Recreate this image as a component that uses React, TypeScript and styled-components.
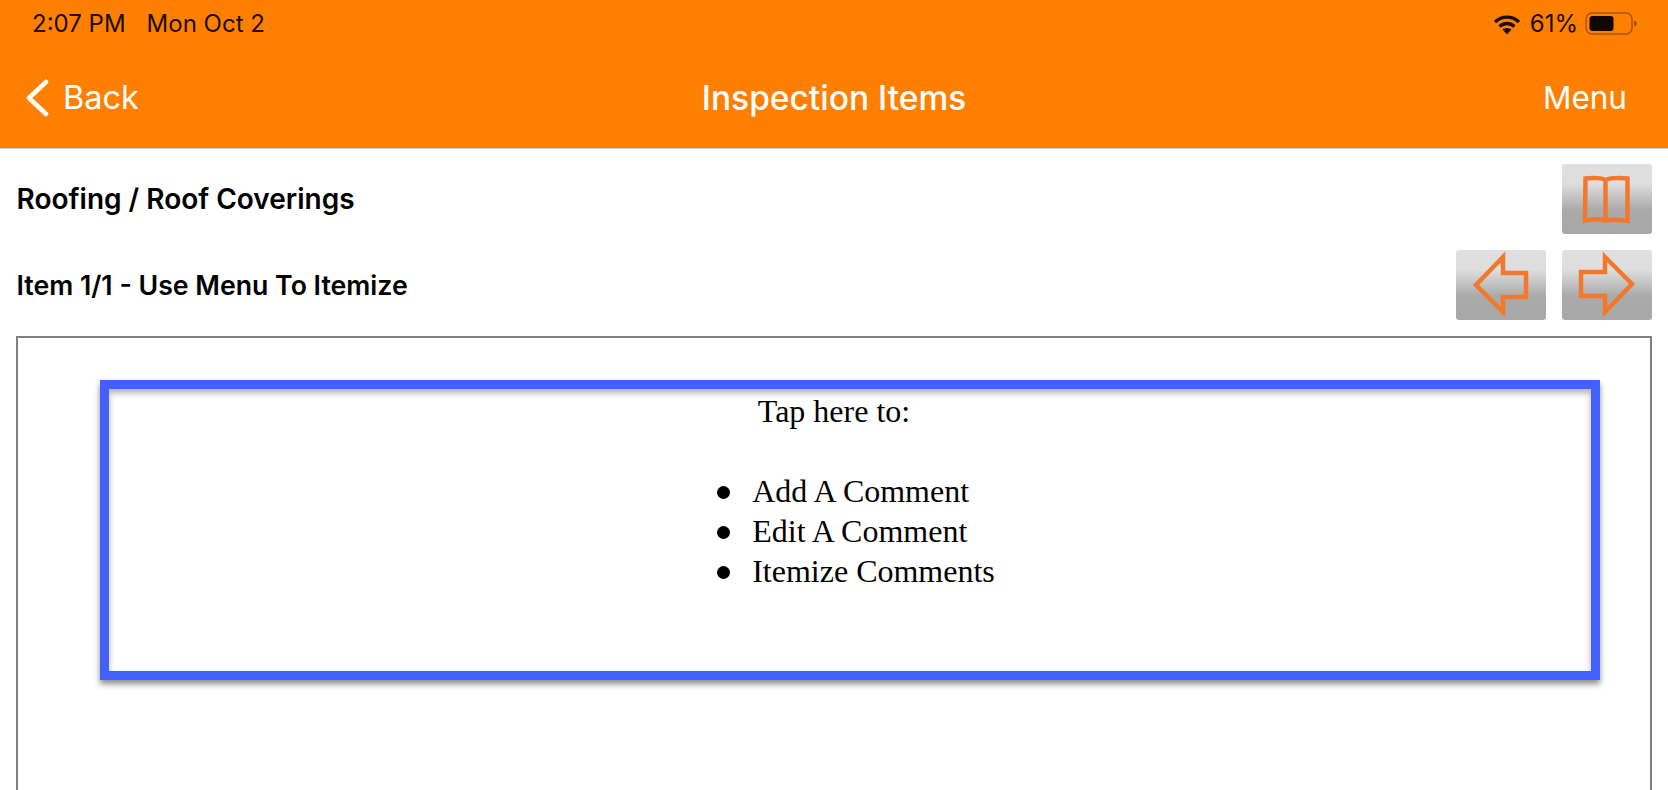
import React from "react";
import styled, { createGlobalStyle } from "styled-components";

const Global = createGlobalStyle`
  html, body { margin: 0; padding: 0; background: #fff; }
  body { font-family: Inter, "Liberation Sans", sans-serif; }
  #root { height: 790px; overflow: hidden; }
`;

const Page = styled.div`
  display: flex;
  flex-direction: column;
  height: 790px;
  overflow: hidden;
`;

const Header = styled.header`
  flex: none;
  height: 148px;
  background: #ff8000;
  border-bottom: 1px solid #d0d0d0;
  box-sizing: content-box;
  display: flex;
  flex-direction: column;
`;

const StatusBar = styled.div`
  height: 48px;
  padding: 0 30px 0 32px;
  display: flex;
  align-items: center;
  justify-content: space-between;
  color: #1c0c00;
  font-size: 24px;
  line-height: 48px;
`;

const StatusGroup = styled.div`
  display: flex;
  align-items: center;
`;

const DateText = styled.span`
  margin-left: 21px;
`;

const Percent = styled.span`
  margin: 0 7px 0 9px;
`;

const NavBar = styled.nav`
  height: 100px;
  padding: 0 41px 0 25px;
  display: grid;
  grid-template-columns: 1fr auto 1fr;
  align-items: center;
  color: #fff;
  font-size: 32.5px;
  line-height: 100px;
`;

const BackLink = styled.div`
  display: flex;
  align-items: center;
  gap: 14px;
  font-weight: 400;
`;

const Title = styled.div`
  font-weight: 500;
  font-size: 33.5px;
  margin-left: 16px;
`;

const MenuLink = styled.div`
  justify-self: end;
  font-size: 31.500px;
  font-weight: 400;
`;

const Content = styled.main`
  flex: 1;
  padding: 15px 16px 0 16px;
  display: flex;
  flex-direction: column;
  min-height: 0;
`;

const Row = styled.div<{ $gap: number }>`
  display: flex;
  align-items: center;
  justify-content: space-between;
  height: 70px;
  margin-bottom: ${(p) => p.$gap}px;
`;

const Heading = styled.h1<{ $size: number }>`
  margin: 0;
  padding-left: 0.5px;
  font-size: ${(p) => p.$size}px;
  font-weight: 600;
  color: #000;
`;

const Buttons = styled.div`
  display: flex;
  gap: 16px;
`;

const IconButton = styled.button`
  width: 90px;
  height: 70px;
  padding: 0;
  border: 0;
  border-radius: 3px;
  background: linear-gradient(#e0e0e0 0%, #dedede 28%, #aaaaaa 66%, #a8a8a8 100%);
  display: block;
`;

const Frame = styled.section`
  flex: none;
  height: 600px;
  margin-top: 16px;
  border: 2px solid #808080;
  padding: 42px 50px 0 82px;
  background: #fff;
`;

const TapBox = styled.div`
  height: 300px;
  box-sizing: border-box;
  border: 9px solid #4360ff;
  padding-top: 2px;
  box-shadow: 0 4px 6px rgba(0, 0, 0, 0.45), inset 0 4px 6px rgba(0, 0, 0, 0.3);
  font-family: "Liberation Serif", "Times New Roman", serif;
  font-size: 32px;
  line-height: 40px;
  color: #000;
  text-align: center;
`;

const TapLine = styled.p`
  margin: 0 0 40px;
  padding-right: 32px;
`;

const Options = styled.ul`
  display: inline-block;
  margin: 0;
  padding: 0 0 0 47px;
  text-align: left;
  list-style: none;
`;

const Option = styled.li`
  &::before {
    content: "";
    display: inline-block;
    width: 13px;
    height: 13px;
    border-radius: 50%;
    background: #000;
    margin: 0 22px 0 -35px;
    vertical-align: 3px;
  }
`;

const stroke = { fill: "none", stroke: "#f4782c", strokeWidth: 4.5, strokeLinejoin: "miter" as const };

const Book = () => (
  <svg width="90" height="70" viewBox="0 0 90 70" style={{ display: "block" }}>
    <path {...stroke} d="M43.500 16c-3-2-13-2.500-20-1.500l-.5 42c7-1.500 15-1.500 20.500 0 6-1.500 13-1 22 .5V14.500c-8-1-19-.5-22 1.500zM43.500 16v41" />
  </svg>
);

const ArrowLeft = () => (
  <svg width="90" height="70" viewBox="0 0 90 70" style={{ display: "block" }}>
    <path {...stroke} d="M47 7 20 35l27 27V47h23V23H47z" />
  </svg>
);

const ArrowRight = () => (
  <svg width="90" height="70" viewBox="0 0 90 70" style={{ display: "block" }}>
    <path {...stroke} d="M43 7l27 27-27 28V46H19V22h24z" />
  </svg>
);

const Wifi = () => (
  <svg width="28" height="21" viewBox="0 0 28 21" style={{ display: "block" }}>
    <g fill="none" stroke="#1c0c00" strokeWidth="3.400">
      <path d="M2 8c7-6.500 17-6.500 24 0" />
      <path d="M6.500 12.500c4.500-4 10.500-4 15 0" />
    </g>
    <path fill="#1c0c00" d="M9.500 15.500c2.700-2 6.300-2 9 0L14 20.500z" />
  </svg>
);

const Battery = () => (
  <svg width="53" height="24" viewBox="0 0 53 24" style={{ display: "block" }}>
    <rect x="1" y="1" width="46" height="21" rx="6" fill="none" stroke="#a55410" strokeWidth="1.500" />
    <rect x="4.500" y="4" width="24" height="15" rx="3" fill="#120800" />
    <path d="M49 8.500c2 .5 3 2 3 3s-1 2.500-3 3z" fill="#a55410" />
  </svg>
);

const Chevron = () => (
  <svg width="24" height="38" viewBox="0 0 24 38" style={{ display: "block" }}>
    <path d="M21 3 4 19l17 16" fill="none" stroke="#fff" strokeWidth="4.500" strokeLinecap="round" strokeLinejoin="round" />
  </svg>
);

export default function App() {
  return (
    <Page>
      <Global />
      <Header>
        <StatusBar>
          <StatusGroup>
            <span>2:07 PM</span>
            <DateText>Mon Oct 2</DateText>
          </StatusGroup>
          <StatusGroup>
            <Wifi />
            <Percent>61%</Percent>
            <Battery />
          </StatusGroup>
        </StatusBar>
        <NavBar>
          <BackLink>
            <Chevron />
            Back
          </BackLink>
          <Title>Inspection Items</Title>
          <MenuLink>Menu</MenuLink>
        </NavBar>
      </Header>
      <Content>
        <Row $gap={16}>
          <Heading $size={28}>Roofing / Roof Coverings</Heading>
          <Buttons>
            <IconButton aria-label="Book"><Book /></IconButton>
          </Buttons>
        </Row>
        <Row $gap={0}>
          <Heading $size={26.7}>Item 1/1 - Use Menu To Itemize</Heading>
          <Buttons>
            <IconButton aria-label="Previous"><ArrowLeft /></IconButton>
            <IconButton aria-label="Next"><ArrowRight /></IconButton>
          </Buttons>
        </Row>
        <Frame>
          <TapBox>
            <TapLine>Tap here to:</TapLine>
            <Options>
              <Option>Add A Comment</Option>
              <Option>Edit A Comment</Option>
              <Option>Itemize Comments</Option>
            </Options>
          </TapBox>
        </Frame>
      </Content>
    </Page>
  );
}
